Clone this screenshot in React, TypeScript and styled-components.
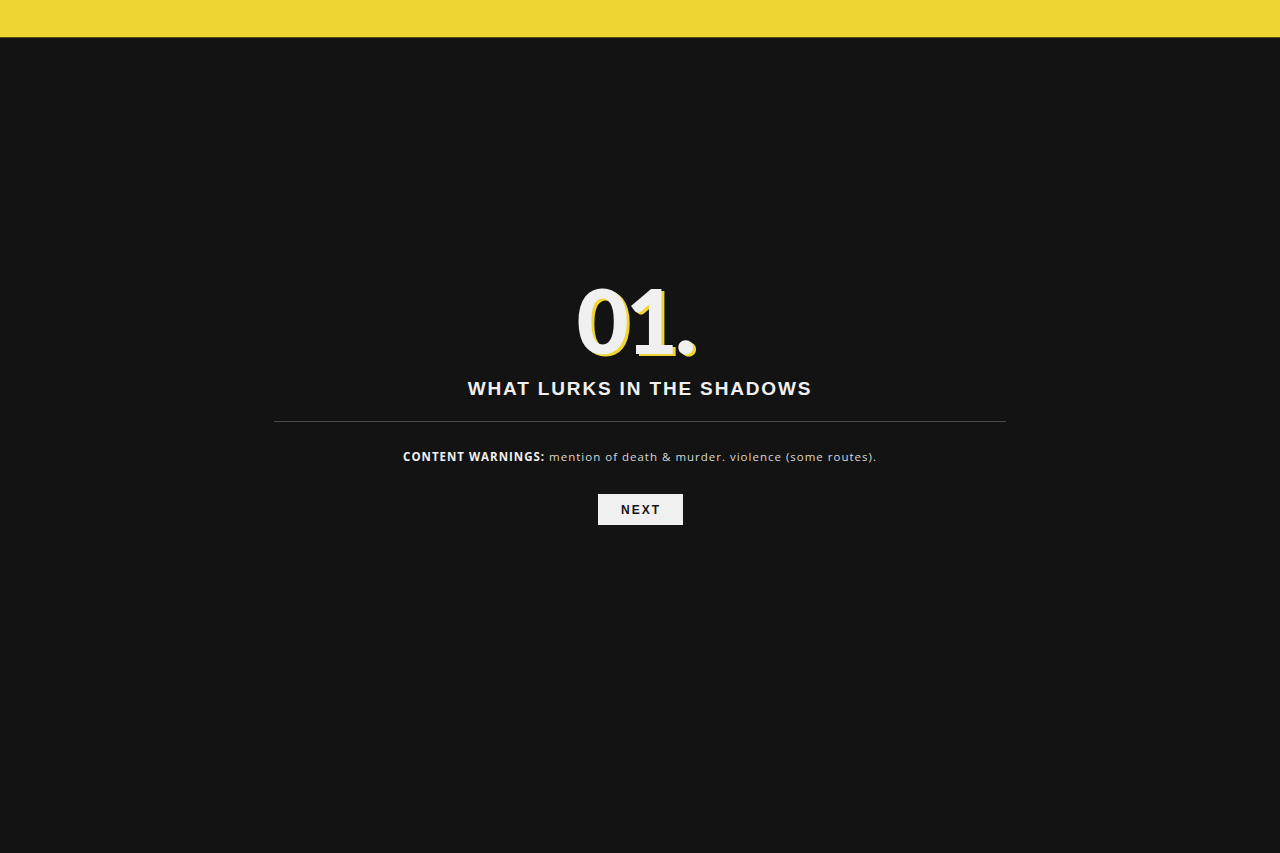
import React from 'react';
import styled, {createGlobalStyle} from 'styled-components';

const $YELLOW = '#eed534';
const $BG = '#131313';
const $WHITE = '#f0f0f0';

const GlobalStyle = createGlobalStyle`
  html, body {
    margin: 0;
    padding: 0;
    background: ${$BG};
  }

  #root {
    min-height: 100vh;
  }
`;

const Page = styled.div`
  min-height: 853px;
  display: flex;
  flex-direction: column;
  background: ${$BG};
`;

const TopBar = styled.div`
  height: 37px;
  background: ${$YELLOW};
  border-bottom: 1px solid #5a4f14;
`;

const Intro = styled.main`
  display: flex;
  flex-direction: column;
  align-items: center;
  padding-top: 236px;
`;

const ChapterNumber = styled.h1`
  margin: 0 10px 0 0;
  font-family: Lato, 'Noto Sans', sans-serif;
  font-weight: 900;
  font-size: 90px;
  line-height: 90px;
  letter-spacing: -3px;
  color: ${$WHITE};
  text-shadow: 3px 2px 0 ${$YELLOW};
`;

const ChapterTitle = styled.h2`
  margin: 0;
  padding-top: 13px;
  font-family: 'Liberation Sans', Arial, sans-serif;
  font-weight: 700;
  font-size: 19px;
  line-height: 24px;
  letter-spacing: 1.85px;
  color: ${$WHITE};
`;

const Divider = styled.hr`
  width: 732px;
  margin: 20px 0 0;
  border: none;
  border-top: 1px solid #4a4a4a;
`;

const Warning = styled.p`
  margin: 27px 0 0;
  font-family: 'Open Sans', sans-serif;
  font-size: 11.5px;
  line-height: 16px;
  letter-spacing: 1px;
  color: #d8d8d8;

  strong {
    font-weight: 700;
    color: ${$WHITE};
  }
`;

const NextButton = styled.button`
  margin-top: 29px;
  width: 85px;
  height: 31px;
  border: none;
  background: ${$WHITE};
  color: #141414;
  font-family: 'Liberation Sans', Arial, sans-serif;
  font-weight: 700;
  font-size: 12px;
  letter-spacing: 2px;
  padding: 0 0 0 2px;
  cursor: pointer;
`;

const App: React.FC = () => (
  <Page>
    <GlobalStyle />
    <TopBar />
    <Intro>
      <ChapterNumber>01.</ChapterNumber>
      <ChapterTitle>WHAT LURKS IN THE SHADOWS</ChapterTitle>
      <Divider />
      <Warning>
        <strong>CONTENT WARNINGS:</strong> mention of death &amp; murder. violence (some routes).
      </Warning>
      <NextButton>NEXT</NextButton>
    </Intro>
  </Page>
);

export default App;
